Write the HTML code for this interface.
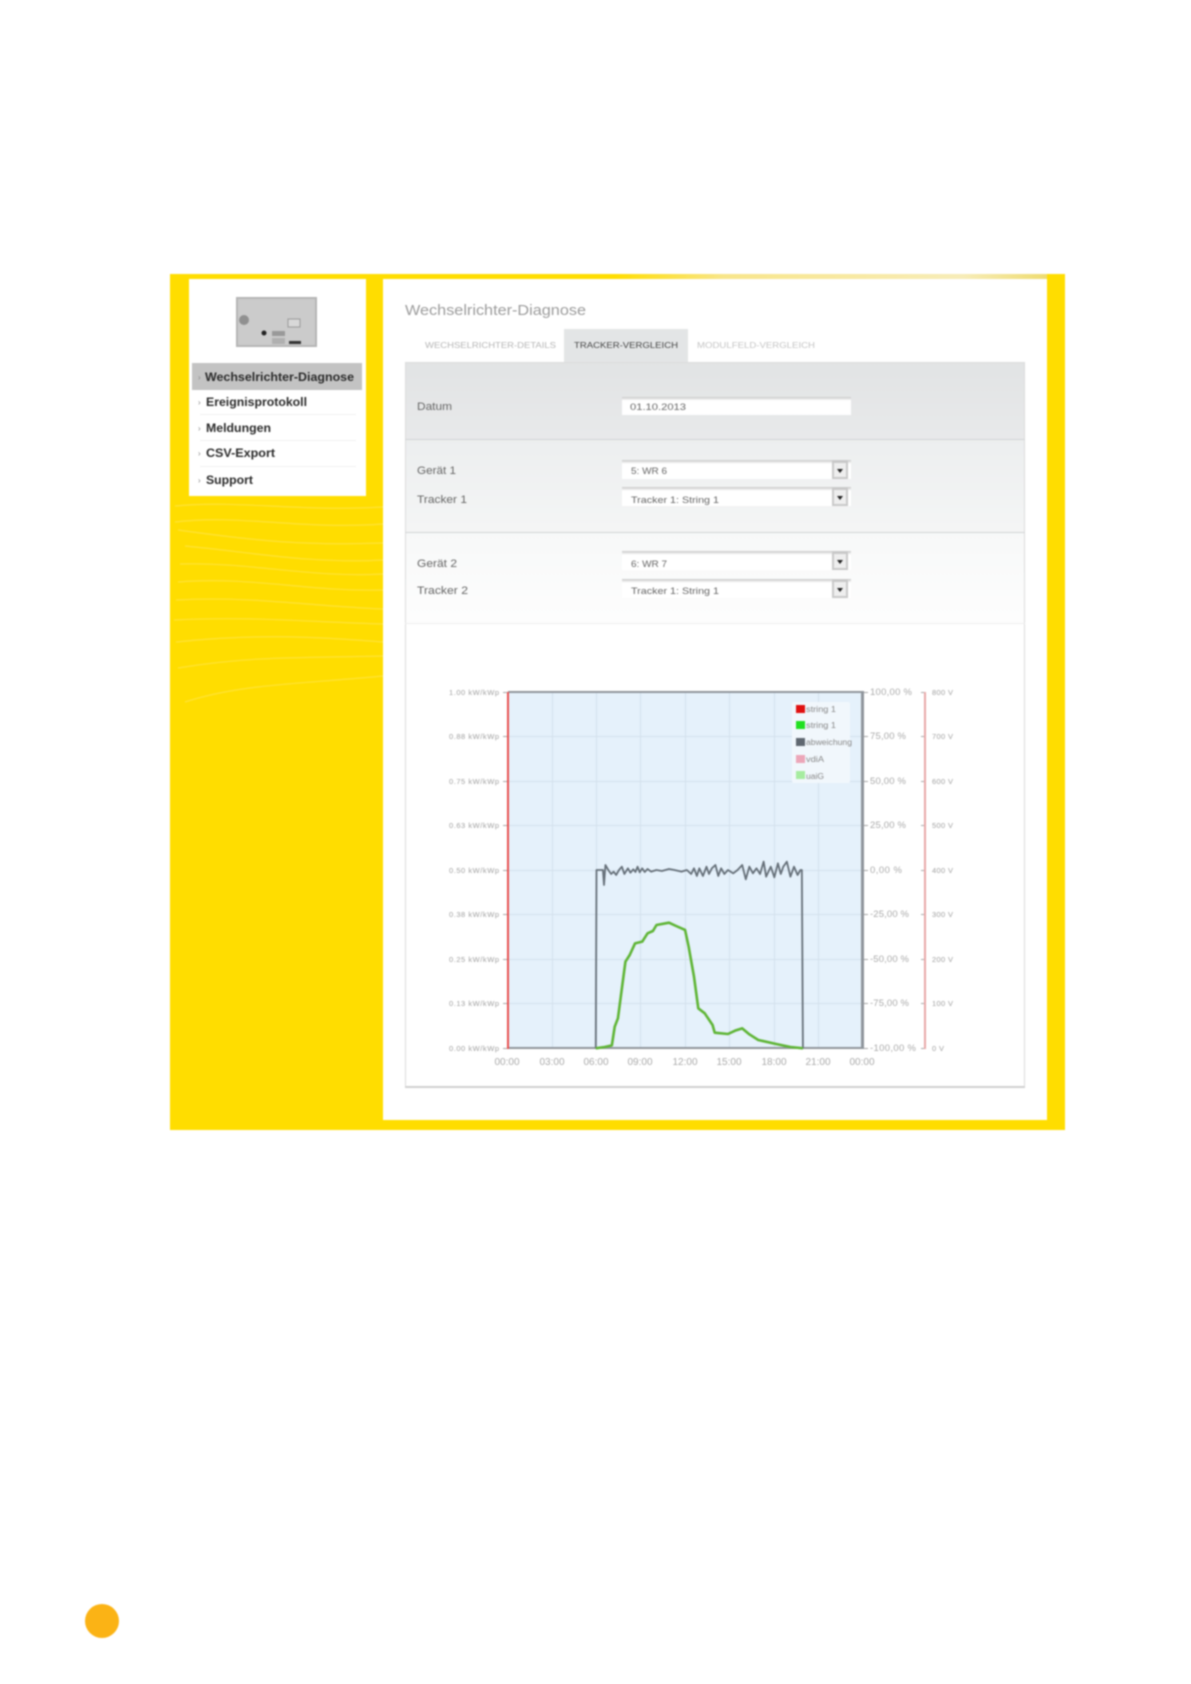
<!DOCTYPE html>
<html lang="de"><head><meta charset="utf-8"><title>Wechselrichter-Diagnose</title>
<style>
html,body{margin:0;padding:0;background:#fff;width:1191px;height:1684px;overflow:hidden}
svg{display:block;filter:blur(.7px)}
text{font-family:"Liberation Sans",sans-serif}
.m{font-size:11.5px;font-weight:bold;fill:#2a2a2a}
.l{font-size:11px;fill:#666}
.v{font-size:9.5px;fill:#666}
.a{font-size:7.5px;fill:#a0a0a0}
.b{font-size:9.5px;fill:#aaa}
.x{font-size:10px;fill:#aaa;text-anchor:middle}
.t{font-size:8.5px}
.g{font-size:8px;fill:#888}
</style></head><body>
<svg xmlns="http://www.w3.org/2000/svg" width="1191" height="1684" viewBox="0 0 1191 1684">
<defs>
<linearGradient id="top" x1="0" x2="1" y1="0" y2="0"><stop offset="0" stop-color="#ffdd00"/><stop offset=".34" stop-color="#ffdd00"/><stop offset=".5" stop-color="#f8e58a"/><stop offset=".85" stop-color="#f7ecb8"/><stop offset="1" stop-color="#ecd860"/></linearGradient>
<linearGradient id="s1" x1="0" x2="0" y1="0" y2="1"><stop offset="0" stop-color="#e1e3e4"/><stop offset="1" stop-color="#e8e9ea"/></linearGradient>
<linearGradient id="s2" x1="0" x2="0" y1="0" y2="1"><stop offset="0" stop-color="#eceeef"/><stop offset="1" stop-color="#f4f5f5"/></linearGradient>
<linearGradient id="s3" x1="0" x2="0" y1="0" y2="1"><stop offset="0" stop-color="#f7f8f8"/><stop offset="1" stop-color="#fdfdfd"/></linearGradient>
<linearGradient id="inp" x1="0" x2="0" y1="0" y2="1"><stop offset="0" stop-color="#c8c8c8"/><stop offset=".2" stop-color="#fff"/></linearGradient>
</defs>
<rect width="1191" height="1684" fill="#fff"/>
<rect x="170" y="274" width="895" height="856" fill="#ffdd00"/>
<rect x="383" y="274" width="682" height="5" fill="url(#top)"/>
<rect x="1047" y="274" width="18" height="5" fill="#ffdd00"/>
<g fill="none" stroke="#ffe75c" stroke-width="1.2" opacity=".6">
<path d="M175 506C240 500 300 512 383 507"/>
<path d="M175 522C240 514 300 530 383 524"/>
<path d="M178 530C250 540 300 546 383 543"/>
<path d="M185 546C250 552 310 564 383 560"/>
<path d="M180 564C250 562 310 578 383 574"/>
<path d="M178 582C250 576 310 592 383 590"/>
<path d="M176 600C250 596 310 606 383 609"/>
<path d="M174 620C250 616 310 622 383 624"/>
<path d="M176 642C250 634 310 636 383 642"/>
<path d="M178 668C250 656 300 658 383 656"/>
<path d="M185 702C240 684 300 684 383 676"/>
</g>
<!-- left panel -->
<rect x="189" y="279" width="177" height="217" fill="#fff"/>
<rect x="236" y="297" width="81" height="50" fill="#b5b5b5"/>
<rect x="238" y="299" width="77" height="46" fill="#cbcbcb"/>
<circle cx="244" cy="320" r="5" fill="#909090"/>
<rect x="288" y="319" width="12" height="8" fill="#d8d8d8" stroke="#999" stroke-width="1"/>
<circle cx="264" cy="333" r="2.5" fill="#222"/>
<rect x="272" y="331" width="13" height="5" fill="#999"/>
<rect x="272" y="338" width="13" height="6" fill="#b0b0b0"/>
<rect x="289" y="341" width="12" height="3" fill="#333"/>
<rect x="192" y="363" width="170" height="27" fill="#c3c3c3"/>
<g stroke="#f1f1f1"><path d="M200 414.500H356M200 440.500H356M200 466.500H356"/></g>
<g fill="#888" font-size="8"><text x="198" y="380">›</text><text x="198" y="405">›</text><text x="198" y="431">›</text><text x="198" y="456">›</text><text x="198" y="483">›</text></g>
<text class="m" x="205" y="381" textLength="149" lengthAdjust="spacingAndGlyphs">Wechselrichter-Diagnose</text>
<text class="m" x="206" y="406" textLength="101" lengthAdjust="spacingAndGlyphs">Ereignisprotokoll</text>
<text class="m" x="206" y="432" textLength="65" lengthAdjust="spacingAndGlyphs">Meldungen</text>
<text class="m" x="206" y="457" textLength="69" lengthAdjust="spacingAndGlyphs">CSV-Export</text>
<text class="m" x="206" y="484" textLength="47" lengthAdjust="spacingAndGlyphs">Support</text>
<!-- right panel -->
<rect x="383" y="279" width="664" height="841" fill="#fff"/>
<text x="405" y="315" font-size="15" fill="#9c9c9c" textLength="181" lengthAdjust="spacingAndGlyphs">Wechselrichter-Diagnose</text>
<rect x="564" y="329" width="124" height="33" fill="#e3e5e6"/>
<text class="t" x="425" y="348" fill="#b5b5b5" textLength="131" lengthAdjust="spacingAndGlyphs">WECHSELRICHTER-DETAILS</text>
<text class="t" x="574" y="348" fill="#444" textLength="104" lengthAdjust="spacingAndGlyphs">TRACKER-VERGLEICH</text>
<text class="t" x="697" y="348" fill="#c4c4c4" textLength="118" lengthAdjust="spacingAndGlyphs">MODULFELD-VERGLEICH</text>
<!-- form -->
<rect x="405" y="362" width="620" height="77" fill="url(#s1)"/>
<rect x="405" y="440" width="620" height="92" fill="url(#s2)"/>
<rect x="405" y="533" width="620" height="90" fill="url(#s3)"/>
<rect x="405.500" y="362.500" width="619" height="725" fill="none" stroke="#dcdcdc"/>
<rect x="405" y="1086" width="620" height="2" fill="#d0d0d0"/>
<path d="M405 439.500H1025M405 532.500H1025" stroke="#d2d4d5"/><path d="M405 623.500H1025" stroke="#eee"/>
<text class="l" x="417" y="410" textLength="35" lengthAdjust="spacingAndGlyphs">Datum</text>
<text class="l" x="417" y="474" textLength="39" lengthAdjust="spacingAndGlyphs">Gerät 1</text>
<text class="l" x="417" y="503" textLength="50" lengthAdjust="spacingAndGlyphs">Tracker 1</text>
<text class="l" x="417" y="567" textLength="40" lengthAdjust="spacingAndGlyphs">Gerät 2</text>
<text class="l" x="417" y="594" textLength="51" lengthAdjust="spacingAndGlyphs">Tracker 2</text>
<rect x="622" y="397" width="229" height="18" fill="url(#inp)"/>
<text class="v" x="630" y="410" textLength="56" lengthAdjust="spacingAndGlyphs">01.10.2013</text>
<g>
<rect x="622" y="460" width="229" height="19" fill="url(#inp)"/><rect x="622" y="487" width="229" height="19" fill="url(#inp)"/><rect x="622" y="551" width="229" height="19" fill="url(#inp)"/><rect x="622" y="579" width="229" height="19" fill="url(#inp)"/>
<g fill="#c9c9c9"><rect x="832" y="460" width="16" height="19"/><rect x="832" y="487" width="16" height="19"/><rect x="832" y="551" width="16" height="19"/><rect x="832" y="579" width="16" height="19"/></g>
<g fill="#eee"><rect x="834" y="463" width="12" height="14"/><rect x="834" y="490" width="12" height="14"/><rect x="834" y="554" width="12" height="14"/><rect x="834" y="582" width="12" height="14"/></g>
<g fill="#222"><path d="M837 469h6l-3 4zM837 496h6l-3 4zM837 560h6l-3 4zM837 588h6l-3 4z"/></g>
</g>
<text class="v" x="631" y="474" textLength="36" lengthAdjust="spacingAndGlyphs">5: WR 6</text>
<text class="v" x="631" y="503" textLength="88" lengthAdjust="spacingAndGlyphs">Tracker 1: String 1</text>
<text class="v" x="631" y="567" textLength="36" lengthAdjust="spacingAndGlyphs">6: WR 7</text>
<text class="v" x="631" y="594" textLength="88" lengthAdjust="spacingAndGlyphs">Tracker 1: String 1</text>
<!-- chart -->
<g transform="translate(-1 0)">
<rect x="509" y="693" width="354" height="355" fill="#e5f1fb"/>
<g stroke="#d3e0ec" fill="none">
<path d="M553.500 693V1048M597.500 693V1048M641.500 693V1048M686.500 693V1048M730.500 693V1048M775.500 693V1048M819.500 693V1048"/>
<path d="M509 736.500H863M509 781.500H863M509 825.500H863M509 870.500H863M509 914.500H863M509 959.500H863M509 1003.500H863"/>
</g>
<g stroke="#a8a8a8" stroke-width="1"><path d="M504 692.500h5M504 736.500h5M504 781.500h5M504 825.500h5M504 870.500h5M504 914.500h5M504 959.500h5M504 1003.500h5M504 1048.500h5"/><path d="M863 692.500h6M863 736.500h6M863 781.500h6M863 825.500h6M863 870.500h6M863 914.500h6M863 959.500h6M863 1003.500h6M863 1048.500h6"/></g>
<rect x="509" y="691" width="355" height="2" fill="#8f959b"/>
<rect x="509" y="1047" width="355" height="2" fill="#8f959b"/>
<rect x="862" y="691" width="3" height="358" fill="#8f959b"/>
<rect x="508" y="692" width="2" height="357" fill="#e8504f"/>
<g transform="translate(420 670) scale(.35714 .33333)" fill="none">
<path vector-effect="non-scaling-stroke" stroke="#667079" stroke-width="1.800" stroke-linejoin="round" d="M495 1135L497 600L515 600L518 645L522 585L530 600L538 612L545 605L552 615L560 600L568 590L575 612L585 595L592 608L600 598L606 606L612 590L618 607L625 595L632 606L640 597L650 605L665 600L680 603L700 597L715 600L735 605L750 600L762 612L770 595L778 618L785 595L795 618L805 590L812 612L820 595L830 585L838 618L846 595L855 612L865 600L880 610L892 600L905 585L915 628L925 590L935 610L945 595L955 612L965 575L972 620L985 590L995 622L1005 580L1013 612L1020 590L1030 575L1040 620L1050 590L1060 615L1068 600L1072 600L1075 1135"/>
<path vector-effect="non-scaling-stroke" stroke="#5fb536" stroke-width="2.600" stroke-linejoin="round" d="M495 1135L520 1131L540 1126L548 1070L557 1045L565 980L578 875L590 855L605 820L625 815L640 790L655 783L665 765L700 758L720 768L745 780L755 830L770 920L782 1015L800 1030L822 1065L828 1088L865 1092L885 1082L905 1075L925 1093L950 1110L1000 1122L1040 1131L1075 1135"/>
</g>
<text class="b" x="871" y="695" textLength="42">100,00 %</text><text class="b" x="871" y="739" textLength="36">75,00 %</text><text class="b" x="871" y="784" textLength="36">50,00 %</text><text class="b" x="871" y="828" textLength="36">25,00 %</text><text class="b" x="871" y="873" textLength="32">0,00 %</text><text class="b" x="871" y="917" textLength="39">-25,00 %</text><text class="b" x="871" y="962" textLength="39">-50,00 %</text><text class="b" x="871" y="1006" textLength="39">-75,00 %</text><text class="b" x="871" y="1051" textLength="46">-100,00 %</text>
<text class="x" x="508" y="1065">00:00</text><text class="x" x="553" y="1065">03:00</text><text class="x" x="597" y="1065">06:00</text><text class="x" x="641" y="1065">09:00</text><text class="x" x="686" y="1065">12:00</text><text class="x" x="730" y="1065">15:00</text><text class="x" x="775" y="1065">18:00</text><text class="x" x="819" y="1065">21:00</text><text class="x" x="863" y="1065">00:00</text>
</g>
<g stroke="#a8a8a8" stroke-width="1"><path d="M925 692.500h-4M925 736.500h-4M925 781.500h-4M925 825.500h-4M925 870.500h-4M925 914.500h-4M925 959.500h-4M925 1003.500h-4M925 1048.500h-4"/></g>
<rect x="924" y="692" width="2" height="357" fill="#e8a8a8"/>
<g transform="translate(-1 0)">
<rect x="793" y="702" width="58" height="81" fill="#f1f7fc" rx="2"/>
<rect x="797" y="705" width="9" height="8" fill="#e01010"/>
<rect x="797" y="721" width="9" height="8" fill="#20e020"/>
<rect x="797" y="738" width="9" height="8" fill="#5f6770"/>
<rect x="797" y="755" width="9" height="8" fill="#eca6b8"/>
<rect x="797" y="771" width="9" height="8" fill="#a6eca0"/>
<text class="g" x="807" y="712" textLength="30" lengthAdjust="spacingAndGlyphs">string 1</text>
<text class="g" x="807" y="728" textLength="30" lengthAdjust="spacingAndGlyphs">string 1</text>
<text class="g" x="807" y="745" textLength="46" lengthAdjust="spacingAndGlyphs">abweichung</text>
<text class="g" x="807" y="762" textLength="18" lengthAdjust="spacingAndGlyphs">vdiA</text>
<text class="g" x="807" y="779" textLength="18" lengthAdjust="spacingAndGlyphs">uaiG</text>
</g>
<g>
<text class="a" x="449" y="695" textLength="50">1.00 kW/kWp</text><text class="a" x="449" y="739" textLength="50">0.88 kW/kWp</text><text class="a" x="449" y="784" textLength="50">0.75 kW/kWp</text><text class="a" x="449" y="828" textLength="50">0.63 kW/kWp</text><text class="a" x="449" y="873" textLength="50">0.50 kW/kWp</text><text class="a" x="449" y="917" textLength="50">0.38 kW/kWp</text><text class="a" x="449" y="962" textLength="50">0.25 kW/kWp</text><text class="a" x="449" y="1006" textLength="50">0.13 kW/kWp</text><text class="a" x="449" y="1051" textLength="50">0.00 kW/kWp</text>
<text class="a" x="932" y="695" textLength="21">800 V</text><text class="a" x="932" y="739" textLength="21">700 V</text><text class="a" x="932" y="784" textLength="21">600 V</text><text class="a" x="932" y="828" textLength="21">500 V</text><text class="a" x="932" y="873" textLength="21">400 V</text><text class="a" x="932" y="917" textLength="21">300 V</text><text class="a" x="932" y="962" textLength="21">200 V</text><text class="a" x="932" y="1006" textLength="21">100 V</text><text class="a" x="932" y="1051" textLength="12">0 V</text>
</g>
<circle cx="102" cy="1621" r="17" fill="#fbb315"/>
</svg>
</body></html>
